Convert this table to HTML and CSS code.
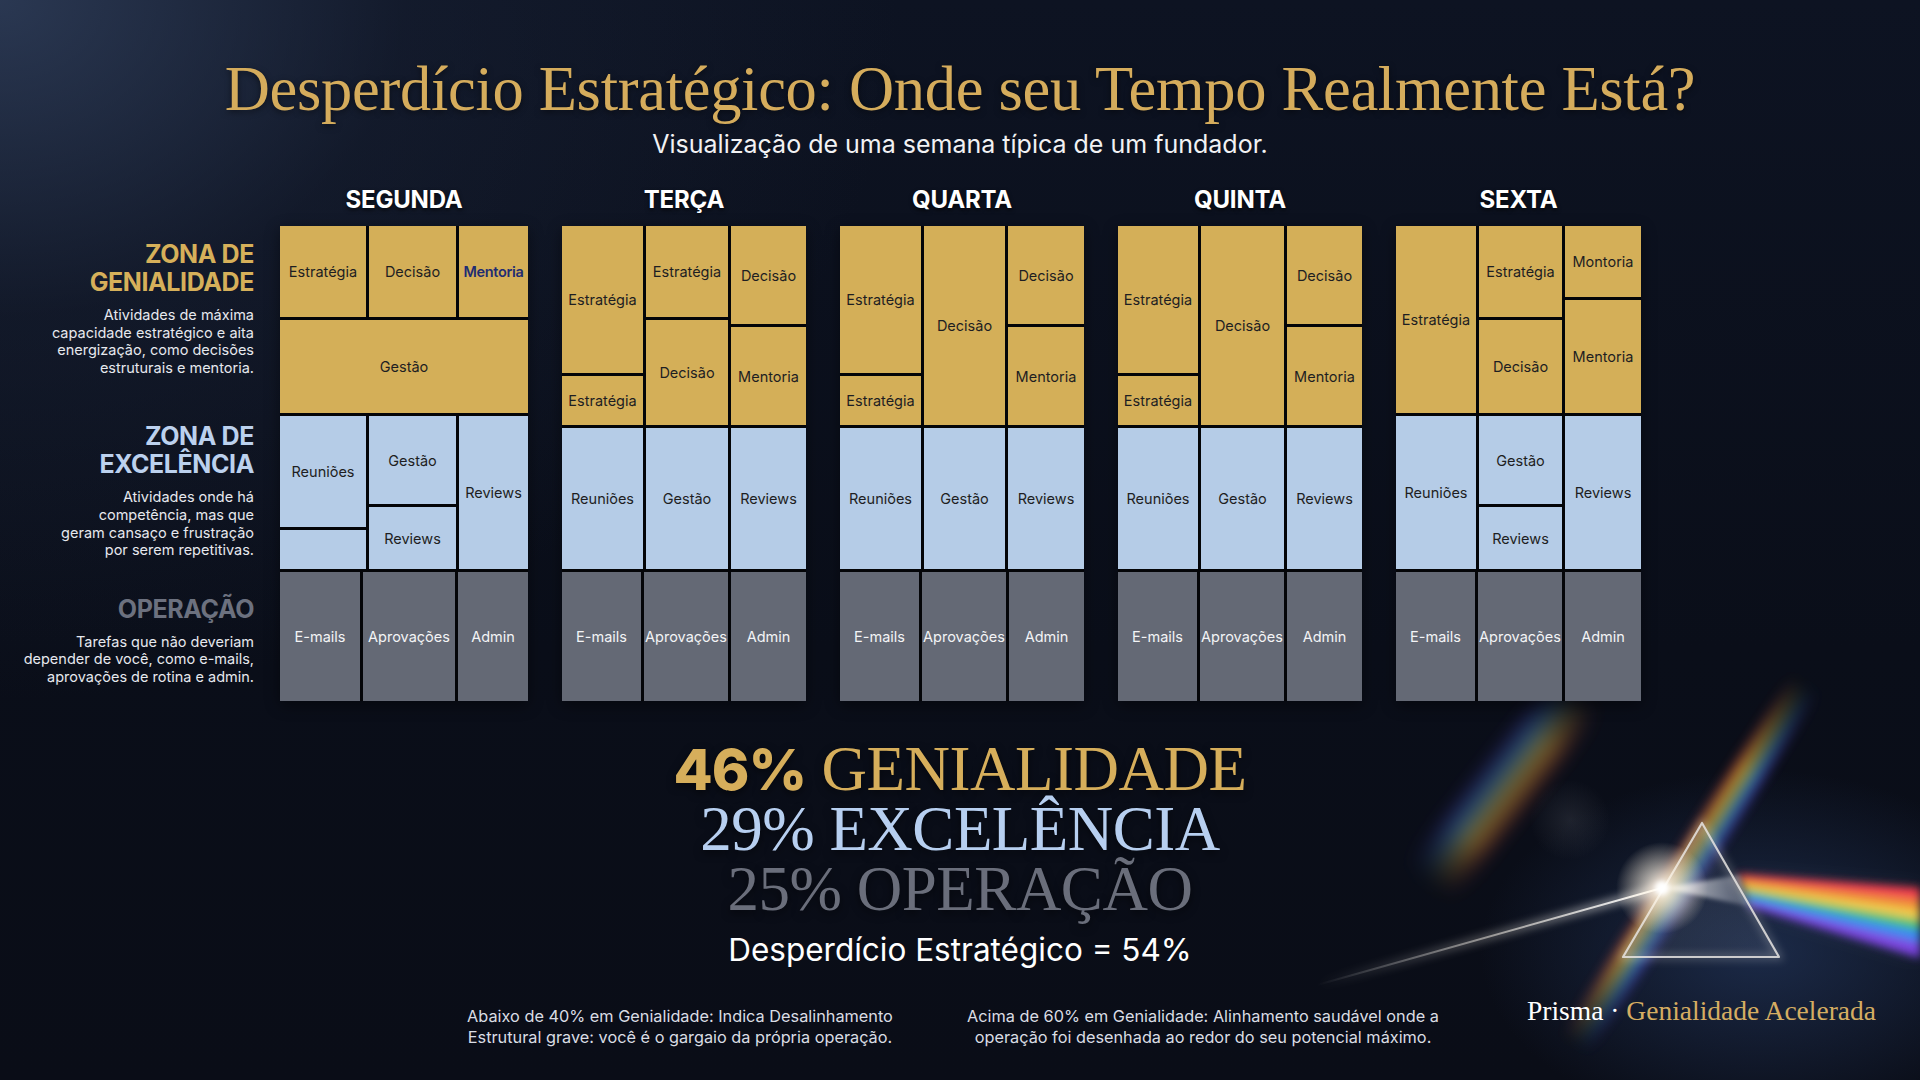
FILE: index.html
```html
<!DOCTYPE html>
<html lang="pt">
<head>
<meta charset="utf-8">
<title>Desperdício Estratégico</title>
<link rel="stylesheet" href="styles.css">
</head>
<body>
<div class="page">
  <svg class="art" viewBox="0 0 1920 1080" width="1920" height="1080" aria-hidden="true">
    <defs>
      <filter id="b2" x="-50%" y="-50%" width="200%" height="200%"><feGaussianBlur stdDeviation="2"/></filter>
      <filter id="b4" x="-50%" y="-50%" width="200%" height="200%"><feGaussianBlur stdDeviation="4"/></filter>
      <filter id="b6" x="-50%" y="-50%" width="200%" height="200%"><feGaussianBlur stdDeviation="6"/></filter>
      <filter id="b10" x="-50%" y="-50%" width="200%" height="200%"><feGaussianBlur stdDeviation="10"/></filter>
      <linearGradient id="beam" x1="1317" y1="985" x2="1662" y2="888" gradientUnits="userSpaceOnUse">
        <stop offset="0" stop-color="#ffffff" stop-opacity="0"/>
        <stop offset="0.5" stop-color="#e9e4dc" stop-opacity="0.55"/>
        <stop offset="1" stop-color="#ffffff" stop-opacity="1"/>
      </linearGradient>
      <linearGradient id="streak" x1="0" y1="0" x2="0" y2="1">
        <stop offset="0" stop-color="#ff3b4a"/>
        <stop offset="0.2" stop-color="#ff9a2e"/>
        <stop offset="0.4" stop-color="#ffdc3c"/>
        <stop offset="0.6" stop-color="#3ccf6e"/>
        <stop offset="0.8" stop-color="#3a7bff"/>
        <stop offset="1" stop-color="#7b3cf0"/>
      </linearGradient>
      <linearGradient id="streakFade" x1="0" y1="0" x2="1" y2="0">
        <stop offset="0" stop-color="#fff" stop-opacity="0"/>
        <stop offset="0.25" stop-color="#fff" stop-opacity="1"/>
        <stop offset="0.75" stop-color="#fff" stop-opacity="1"/>
        <stop offset="1" stop-color="#fff" stop-opacity="0"/>
      </linearGradient>
      <mask id="fadeMask" maskContentUnits="objectBoundingBox">
        <rect x="0" y="0" width="1" height="1" fill="url(#streakFade)"/>
      </mask>
      <radialGradient id="flare" cx="0.5" cy="0.5" r="0.5">
        <stop offset="0" stop-color="#ffffff" stop-opacity="1"/>
        <stop offset="0.25" stop-color="#fff6e6" stop-opacity="0.75"/>
        <stop offset="1" stop-color="#fff0d8" stop-opacity="0"/>
      </radialGradient>
      <radialGradient id="haze" cx="0.5" cy="0.5" r="0.5">
        <stop offset="0" stop-color="#2a4270" stop-opacity="0.55"/>
        <stop offset="1" stop-color="#2a4270" stop-opacity="0"/>
      </radialGradient>
      <radialGradient id="blob" cx="0.5" cy="0.5" r="0.5">
        <stop offset="0" stop-color="#9aa0ad" stop-opacity="0.14"/>
        <stop offset="1" stop-color="#9aa0ad" stop-opacity="0"/>
      </radialGradient>
      <linearGradient id="inner" x1="1662" y1="888" x2="1745" y2="890" gradientUnits="userSpaceOnUse">
        <stop offset="0" stop-color="#ffffff" stop-opacity="0.9"/>
        <stop offset="1" stop-color="#c9ccd6" stop-opacity="0.25"/>
      </linearGradient>
      <linearGradient id="glass" x1="0" y1="0" x2="0" y2="1">
        <stop offset="0" stop-color="#8d9ab4" stop-opacity="0.10"/>
        <stop offset="1" stop-color="#5b6478" stop-opacity="0.22"/>
      </linearGradient>
    </defs>

    <ellipse cx="1760" cy="950" rx="280" ry="180" fill="url(#haze)"/>
    <ellipse cx="1570" cy="820" rx="40" ry="40" fill="url(#blob)"/>

    <!-- faint streak upper left -->
    <g transform="translate(1504 788) rotate(-52) scale(1 -1)" opacity="0.42" filter="url(#b10)">
      <rect x="-120" y="-24" width="240" height="48" fill="url(#streak)" mask="url(#fadeMask)"/>
    </g>

    <!-- diagonal streak through the prism -->
    <g transform="translate(1690 864) rotate(-57.5)" opacity="0.6" filter="url(#b6)">
      <rect x="-215" y="-16" width="430" height="32" fill="url(#streak)" mask="url(#fadeMask)"/>
    </g>

    <!-- incoming beam -->
    <line x1="1317" y1="985" x2="1662" y2="888" stroke="url(#beam)" stroke-width="6" filter="url(#b4)" opacity="0.7"/>
    <line x1="1317" y1="985" x2="1662" y2="888" stroke="url(#beam)" stroke-width="2"/>

    <!-- outgoing rainbow -->
    <g filter="url(#b4)" opacity="0.95">
      <polygon points="1738,874 1920,888 1920,900 1740,879" fill="#ff3646"/>
      <polygon points="1740,879 1920,900 1920,910 1742,884" fill="#ff8a2a"/>
      <polygon points="1742,884 1920,910 1920,920 1744,889" fill="#ffd43c"/>
      <polygon points="1744,889 1920,920 1920,931 1746,895" fill="#3cc96a"/>
      <polygon points="1746,895 1920,931 1920,943 1748,901" fill="#2f86ff"/>
      <polygon points="1748,901 1920,943 1920,958 1750,907" fill="#7a3ce8"/>
    </g>
    <polygon points="1738,874 1920,888 1920,958 1750,907" fill="#ffffff" opacity="0.08" filter="url(#b10)"/>

    <!-- prism -->
    <polygon points="1702,823 1623,957 1779,957" fill="url(#glass)"/>
    <polygon points="1662,888 1740,875 1748,906" fill="url(#inner)" filter="url(#b2)"/>
    <polygon points="1702,823 1623,957 1779,957" fill="none" stroke="#f3f0ea" stroke-width="6" opacity="0.25" filter="url(#b4)"/>
    <polygon points="1702,823 1623,957 1779,957" fill="none" stroke="#e6e4e2" stroke-opacity="0.85" stroke-width="2.2" stroke-linejoin="round"/>
    <line x1="1628" y1="955" x2="1774" y2="955" stroke="#f1d28a" stroke-width="3" opacity="0.35" filter="url(#b2)"/>

    <circle cx="1662" cy="888" r="46" fill="url(#flare)"/>
    <circle cx="1662" cy="888" r="6" fill="#ffffff" filter="url(#b2)"/>
  </svg>

  <header class="head">
    <h1 class="title">Desperdício Estratégico: Onde seu Tempo Realmente Está?</h1>
    <p class="subtitle">Visualização de uma semana típica de um fundador.</p>
  </header>

  <main class="board">
    <aside class="labels">
      <div class="zone zone-gold">
        <h2>ZONA DE<br>GENIALIDADE</h2>
        <p>Atividades de máxima<br>capacidade estratégico e aita<br>energização, como decisões<br>estruturais e mentoria.</p>
      </div>
      <div class="zone zone-blue">
        <h2>ZONA DE<br>EXCELÊNCIA</h2>
        <p>Atividades onde há<br>competência, mas que<br>geram cansaço e frustração<br>por serem repetitivas.</p>
      </div>
      <div class="zone zone-gray">
        <h2>OPERAÇÃO</h2>
        <p>Tarefas que não deveriam<br>depender de você, como e-mails,<br>aprovações de rotina e admin.</p>
      </div>
    </aside>

    <section class="days">
      <!-- SEGUNDA -->
      <div class="day seg">
        <h3 class="dayname">SEGUNDA</h3>
        <div class="stack">
          <div class="band gold short rows">
            <div class="trio h91">
              <div class="cell g">Estratégia</div>
              <div class="cell g">Decisão</div>
              <div class="cell g navy">Mentoria</div>
            </div>
            <div class="cell g grow">Gestão</div>
          </div>
          <div class="band blue cols">
            <div class="col">
              <div class="cell b h111">Reuniões</div>
              <div class="cell b grow"></div>
            </div>
            <div class="col">
              <div class="cell b h88">Gestão</div>
              <div class="cell b grow">Reviews</div>
            </div>
            <div class="col">
              <div class="cell b grow">Reviews</div>
            </div>
          </div>
          <div class="band gray cols">
            <div class="cell k">E-mails</div>
            <div class="cell k">Aprovações</div>
            <div class="cell k">Admin</div>
          </div>
        </div>
      </div>

      <!-- TERÇA -->
      <div class="day ter">
        <h3 class="dayname">TERÇA</h3>
        <div class="stack">
          <div class="band gold tall cols">
            <div class="col">
              <div class="cell g h147">Estratégia</div>
              <div class="cell g grow">Estratégia</div>
            </div>
            <div class="col">
              <div class="cell g h91">Estratégia</div>
              <div class="cell g grow">Decisão</div>
            </div>
            <div class="col">
              <div class="cell g h98">Decisão</div>
              <div class="cell g grow">Mentoria</div>
            </div>
          </div>
          <div class="band blue cols">
            <div class="cell b">Reuniões</div>
            <div class="cell b">Gestão</div>
            <div class="cell b">Reviews</div>
          </div>
          <div class="band gray cols">
            <div class="cell k">E-mails</div>
            <div class="cell k">Aprovações</div>
            <div class="cell k">Admin</div>
          </div>
        </div>
      </div>

      <!-- QUARTA -->
      <div class="day qua">
        <h3 class="dayname">QUARTA</h3>
        <div class="stack">
          <div class="band gold tall cols">
            <div class="col">
              <div class="cell g h147">Estratégia</div>
              <div class="cell g grow">Estratégia</div>
            </div>
            <div class="col">
              <div class="cell g grow">Decisão</div>
            </div>
            <div class="col">
              <div class="cell g h98">Decisão</div>
              <div class="cell g grow">Mentoria</div>
            </div>
          </div>
          <div class="band blue cols">
            <div class="cell b">Reuniões</div>
            <div class="cell b">Gestão</div>
            <div class="cell b">Reviews</div>
          </div>
          <div class="band gray cols">
            <div class="cell k">E-mails</div>
            <div class="cell k">Aprovações</div>
            <div class="cell k">Admin</div>
          </div>
        </div>
      </div>

      <!-- QUINTA -->
      <div class="day qui">
        <h3 class="dayname">QUINTA</h3>
        <div class="stack">
          <div class="band gold tall cols">
            <div class="col">
              <div class="cell g h147">Estratégia</div>
              <div class="cell g grow">Estratégia</div>
            </div>
            <div class="col">
              <div class="cell g grow">Decisão</div>
            </div>
            <div class="col">
              <div class="cell g h98">Decisão</div>
              <div class="cell g grow">Mentoria</div>
            </div>
          </div>
          <div class="band blue cols">
            <div class="cell b">Reuniões</div>
            <div class="cell b">Gestão</div>
            <div class="cell b">Reviews</div>
          </div>
          <div class="band gray cols">
            <div class="cell k">E-mails</div>
            <div class="cell k">Aprovações</div>
            <div class="cell k">Admin</div>
          </div>
        </div>
      </div>

      <!-- SEXTA -->
      <div class="day sex">
        <h3 class="dayname">SEXTA</h3>
        <div class="stack">
          <div class="band gold short cols">
            <div class="col">
              <div class="cell g grow">Estratégia</div>
            </div>
            <div class="col">
              <div class="cell g h91">Estratégia</div>
              <div class="cell g grow">Decisão</div>
            </div>
            <div class="col">
              <div class="cell g h71">Montoria</div>
              <div class="cell g grow">Mentoria</div>
            </div>
          </div>
          <div class="band blue cols">
            <div class="col">
              <div class="cell b grow">Reuniões</div>
            </div>
            <div class="col">
              <div class="cell b h88">Gestão</div>
              <div class="cell b grow">Reviews</div>
            </div>
            <div class="col">
              <div class="cell b grow">Reviews</div>
            </div>
          </div>
          <div class="band gray cols">
            <div class="cell k">E-mails</div>
            <div class="cell k">Aprovações</div>
            <div class="cell k">Admin</div>
          </div>
        </div>
      </div>
    </section>
  </main>

  <section class="stats">
    <div class="stat stat-gold"><span class="pct">46%</span> GENIALIDADE</div>
    <div class="stat stat-blue">29% EXCELÊNCIA</div>
    <div class="stat stat-gray">25% OPERAÇÃO</div>
    <div class="waste">Desperdício Estratégico = 54%</div>
  </section>

  <footer class="notes">
    <p class="note">Abaixo de 40% em Genialidade: Indica Desalinhamento<br>Estrutural grave: você é o gargaio da própria operação.</p>
    <p class="note">Acima de 60% em Genialidade: Alinhamento saudável onde a<br>operação foi desenhada ao redor do seu potencial máximo.</p>
    <p class="brand"><span class="brand-w">Prisma ·</span> <span class="brand-g">Genialidade Acelerada</span></p>
  </footer>
</div>
</body>
</html>
```
FILE: styles.css
```css
* { box-sizing: border-box; }

html, body {
  margin: 0;
  padding: 0;
  width: 1920px;
  height: 1080px;
  overflow: hidden;
  background: #0b0f1a;
}

.page {
  position: relative;
  width: 1920px;
  height: 1080px;
  overflow: hidden;
  font-family: Inter, "Noto Sans", "Liberation Sans", sans-serif;
  color: #ffffff;
  background:
    radial-gradient(ellipse 900px 700px at 0% 0%, rgba(52, 68, 98, 0.75) 0%, rgba(30, 40, 62, 0.35) 45%, rgba(11, 15, 26, 0) 100%),
    linear-gradient(180deg, #0d1322 0%, #0a0e19 60%, #0a0d17 100%);
}

.art {
  position: absolute;
  left: 0;
  top: 0;
  z-index: 0;
  pointer-events: none;
}

.head, .board, .stats, .notes {
  position: relative;
  z-index: 1;
}

/* ---------- header ---------- */
.head {
  text-align: center;
  padding-top: 53px;
}

.title {
  margin: 0;
  font-family: "Liberation Serif", "Times New Roman", serif;
  font-weight: 400;
  font-size: 62.5px;
  line-height: 72px;
  letter-spacing: -0.3px;
  color: #d5ac5c;
  text-shadow: 0 2px 6px rgba(0, 0, 0, 0.5);
}

.subtitle {
  margin: 4px 0 0;
  font-size: 25px;
  line-height: 30px;
  font-weight: 400;
  color: #f2f2f4;
}

/* ---------- board ---------- */
.board {
  display: flex;
  padding-left: 20px;
  margin-top: 27px;
}

.labels {
  width: 234px;
  margin-right: 26px;
  padding-top: 54px;
  text-align: right;
}

.zone h2 {
  margin: 0;
  font-size: 25px;
  line-height: 28px;
  font-weight: 700;
  letter-spacing: -0.4px;
}

.zone p {
  margin: 10px 0 0;
  font-size: 14.5px;
  line-height: 17.6px;
  color: #e6e8ee;
}

.zone-gold h2 { color: #d6b05a; }
.zone-blue { margin-top: 46px; }
.zone-blue h2 { color: #bcd1ee; }
.zone-gray { margin-top: 36px; }
.zone-gray h2 { color: #6c717f; }

.days {
  display: grid;
  grid-template-columns: 248px 244px 244px 244px 245px;
  column-gap: 34px;
}

.day {
  display: flex;
  flex-direction: column;
}

.dayname {
  margin: 0 0 12px;
  height: 28px;
  font-size: 24px;
  line-height: 28px;
  font-weight: 700;
  text-align: center;
  letter-spacing: -0.2px;
  color: #ffffff;
  text-shadow: 0 2px 4px rgba(0, 0, 0, 0.7);
}

.stack {
  display: flex;
  flex-direction: column;
  gap: 3px;
  height: 475px;
  background: #040508;
  box-shadow: 0 4px 14px rgba(0, 0, 0, 0.45);
}

.band {
  display: grid;
  gap: 3px;
}

.band.rows {
  display: flex;
  flex-direction: column;
}

.band.gold.short { height: 187px; }
.band.gold.tall { height: 199px; }
.band.blue { flex: 1; }
.band.gray { height: 129px; }

.trio {
  display: grid;
  gap: 3px;
}

.col {
  display: flex;
  flex-direction: column;
  gap: 3px;
}

/* column widths per day */
.seg .cols, .seg .trio { grid-template-columns: 86px 87px 1fr; }
.seg .band.gray { grid-template-columns: 80px 92px 1fr; }
.ter .cols { grid-template-columns: 81px 82px 1fr; }
.qua .cols { grid-template-columns: 81px 81px 1fr; }
.qui .cols { grid-template-columns: 80px 83px 1fr; }
.sex .cols { grid-template-columns: 80px 83px 1fr; }
.ter .band.gray, .qua .band.gray, .qui .band.gray, .sex .band.gray {
  grid-template-columns: 79px 84px 1fr;
}

.cell {
  display: flex;
  align-items: center;
  justify-content: center;
  text-align: center;
  font-size: 14.5px;
  line-height: 17px;
  color: #1e1e22;
  white-space: nowrap;
}

.cell.g { background: #d4af58; }
.cell.b { background: #b5cce7; }
.cell.k { background: #646975; color: #f3f4f6; }
.cell.navy { color: #1f2c72; font-weight: 600; letter-spacing: -0.3px; }

.grow { flex: 1; }
.h71 { height: 71px; flex: none; }
.h88 { height: 88px; flex: none; }
.h91 { height: 91px; flex: none; }
.h98 { height: 98px; flex: none; }
.h111 { height: 111px; flex: none; }
.h147 { height: 147px; flex: none; }

/* ---------- stats ---------- */
.stats {
  margin-top: 38px;
  text-align: center;
}

.stat {
  font-family: "Liberation Serif", "Times New Roman", serif;
  font-size: 63px;
  line-height: 60px;
  height: 60px;
  letter-spacing: -0.5px;
  text-shadow: 0 3px 8px rgba(0, 0, 0, 0.55);
}

.pct {
  font-family: Inter, "Liberation Sans", sans-serif;
  font-weight: 800;
  font-size: 57px;
  letter-spacing: -1px;
}

.stat-gold { color: #d6ae5b; }
.stat-blue { color: #b7cff0; }
.stat-gray { color: #6a6e7b; }

.waste {
  margin-top: 11px;
  font-size: 31.5px;
  line-height: 40px;
  color: #ffffff;
}

/* ---------- notes ---------- */
.notes {
  display: grid;
  grid-template-columns: 520px 520px 1fr;
  column-gap: 3px;
  padding-left: 420px;
  padding-right: 44px;
  margin-top: 36px;
}

.note {
  margin: 0;
  font-size: 16.3px;
  line-height: 21px;
  text-align: center;
  color: #dadde4;
}

.brand {
  margin: -10px 0 0;
  justify-self: end;
  font-family: "Liberation Serif", "Times New Roman", serif;
  font-size: 27.5px;
  line-height: 30px;
  white-space: nowrap;
}

.brand-w { color: #ffffff; }
.brand-g { color: #d5ad62; }
```
